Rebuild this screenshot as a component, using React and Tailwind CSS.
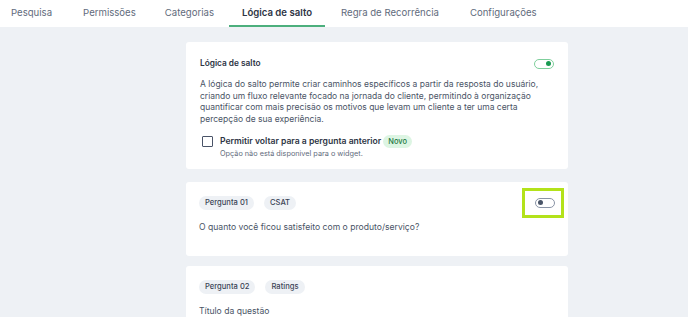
const tabs = [
  { label: 'Pesquisa', mr: 'mr-[31px]' },
  { label: 'Permissões', mr: 'mr-[29px]' },
  { label: 'Categorias', mr: 'mr-[15px]' },
  { label: 'Lógica de salto', mr: 'mr-[16px]', active: true },
  { label: 'Regra de Recorrência', mr: 'mr-[31px]' },
  { label: 'Configurações', mr: '' },
];

function Toggle({ on }) {
  return (
    <span
      className={
        'flex h-[10px] w-[20px] items-center rounded-full border px-[2px] ' +
        (on ? 'justify-end border-[#7fcf9c]' : 'justify-start border-[#8a94a6]')
      }
    >
      <span className={'h-[5px] w-[5px] rounded-full ' + (on ? 'bg-[#1a9a52]' : 'bg-[#4a5568]')} />
    </span>
  );
}

function Chip({ children }) {
  return (
    <span className="rounded-full bg-[#eef1f5] px-[6px] py-[3px] text-[7.6px] font-medium leading-[8px] text-[#3b4456]">
      {children}
    </span>
  );
}

export default function App() {
  return (
    <div className="h-[317px] w-[688px] overflow-hidden bg-[#eef1f5] font-['Inter',sans-serif] text-[#3b4456]">
      <nav className="flex h-[27px] bg-white pl-[11px]">
        {tabs.map((tab) => (
          <div
            key={tab.label}
            className={
              'flex items-center border-b-2 pt-[1px] text-[9.6px] ' +
              tab.mr +
              (tab.active
                ? ' border-[#4caf7d] px-[13px] font-semibold text-[#2d3444]'
                : ' border-transparent text-[#5f6b7c]')
            }
          >
            {tab.label}
          </div>
        ))}
      </nav>

      <main className="ml-[186px] mt-[15px] flex w-[382px] flex-col">
        <section className="rounded-[3px] bg-white px-[14px] pb-[11px] pt-[16px]">
          <div className="flex h-[11px] items-center justify-between">
            <h2 className="text-[8.3px] font-semibold text-[#2d3444]">Lógica de salto</h2>
            <Toggle on />
          </div>
          <p className="mt-[10px] text-[8.5px] leading-[11.7px] text-[#4a5466]">
            A lógica do salto permite criar caminhos específicos a partir da resposta do usuário, criando um fluxo relevante focado na jornada do cliente, permitindo à organização quantificar com mais precisão os motivos que levam um cliente a ter uma certa percepção de sua experiência.
          </p>
          <div className="mt-[10px] flex gap-[7px] pl-[2px]">
            <span className="h-[11px] w-[11px] shrink-0 rounded-[1px] border-[1.5px] border-[#4a5468]" />
            <div>
              <div className="flex h-[11px] items-center gap-[2px]">
                <span className="text-[8.6px] font-semibold text-[#2d3444]">Permitir voltar para a pergunta anterior</span>
                <span className="rounded-full bg-[#ddf5e3] px-[5px] py-[2px] text-[7.5px] font-medium leading-[9px] text-[#1f7a45]">Novo</span>
              </div>
              <p className="mt-[2px] text-[7.3px] leading-[9px] text-[#5f6b7c]">Opção não está disponivel para o widget.</p>
            </div>
          </div>
        </section>

        <section className="mt-[13px] rounded-[3px] bg-white px-[13px] pb-[23px] pt-[14px]">
          <div className="flex h-[14px] items-center justify-between">
            <div className="flex gap-[10px]">
              <Chip>Pergunta 01</Chip>
              <Chip>CSAT</Chip>
            </div>
            <span className="-mr-[9px] flex h-[30px] w-[42px] shrink-0 items-center justify-end border-[3px] border-[#b3e21a] pr-[6px]">
              <Toggle />
            </span>
          </div>
          <p className="mt-[12px] text-[8.6px] leading-[11px] text-[#4a5466]">O quanto você ficou satisfeito com o produto/serviço?</p>
        </section>

        <section className="mt-[10px] rounded-[3px] bg-white px-[13px] pb-[22px] pt-[14px]">
          <div className="flex h-[14px] items-center gap-[10px]">
            <Chip>Pergunta 02</Chip>
            <Chip>Ratings</Chip>
          </div>
          <p className="mt-[12px] text-[8.6px] leading-[11px] text-[#4a5466]">Título da questão</p>
        </section>
      </main>
    </div>
  );
}
